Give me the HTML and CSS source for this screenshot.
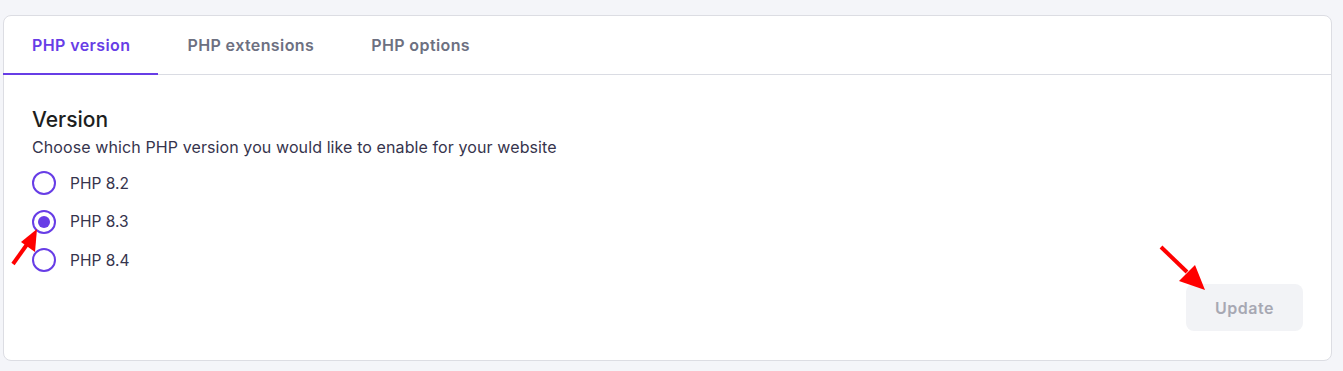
FILE: index.html
```html
<!DOCTYPE html>
<html lang="en">
<head>
<meta charset="utf-8">
<title>PHP configuration</title>
<link rel="stylesheet" href="styles.css">
</head>
<body>
<div class="page">
  <section class="card">
    <nav class="tabs">
      <a class="tab active">PHP version</a>
      <a class="tab">PHP extensions</a>
      <a class="tab">PHP options</a>
    </nav>
    <div class="content">
      <h2 class="title">Version</h2>
      <p class="desc">Choose which PHP version you would like to enable for your website</p>
      <ul class="radios">
        <li class="option"><span class="radio"></span><span class="label">PHP 8.2</span></li>
        <li class="option"><span class="radio checked"></span><span class="label">PHP 8.3</span></li>
        <li class="option"><span class="radio"></span><span class="label">PHP 8.4</span></li>
      </ul>
      <div class="actions">
        <button class="btn" disabled>Update</button>
      </div>
    </div>
  </section>
  <svg class="arrow arrow-radio" width="40" height="50" viewBox="0 0 40 50">
    <line x1="3" y1="45" x2="18" y2="24" stroke="#ff0000" stroke-width="4"/>
    <polygon points="27,10 25,33 11,23" fill="#ff0000"/>
  </svg>
  <svg class="arrow arrow-btn" width="60" height="60" viewBox="0 0 60 60">
    <line x1="4" y1="4" x2="30" y2="29" stroke="#ff0000" stroke-width="4"/>
    <polygon points="48,47 22,38 38,22" fill="#ff0000"/>
  </svg>
</div>
</body>
</html>
```

FILE: styles.css
```css
* { box-sizing: border-box; }
html, body { margin: 0; padding: 0; }
body {
  background: #f4f5f9;
  font-family: Inter, "Noto Sans", "Liberation Sans", sans-serif;
  color: #1d1e20;
}
.page {
  position: relative;
  padding: 15px 11px 10px 3px;
}
.card {
  background: #ffffff;
  border: 1px solid #dcdde3;
  border-radius: 8px;
  height: 346px;
  display: flex;
  flex-direction: column;
}
.tabs {
  display: flex;
  height: 59px;
  border-bottom: 1px solid #dadce3;
  margin-left: -1px;
}
.tab {
  display: flex;
  align-items: center;
  padding: 1px 28px 0 29px;
  font-size: 16px;
  font-weight: 600;
  letter-spacing: 0.4px;
  color: #6d7081;
  border-bottom: 2px solid transparent;
  margin-bottom: -1px;
}
.tab.active {
  color: #673de6;
  border-bottom: 2px solid #673de6;
}
.content {
  flex: 1;
  display: flex;
  flex-direction: column;
  padding: 31px 28px 29px 28px;
}
.title {
  margin: 0;
  font-size: 21px;
  font-weight: 500;
  line-height: 28px;
  color: #1d1e20;
}
.desc {
  margin: 1px 0 0 0;
  font-size: 16px;
  letter-spacing: 0.1px;
  line-height: 24px;
  color: #36344d;
}
.radios {
  list-style: none;
  margin: 12px 0 0 0;
  padding: 0;
  display: flex;
  flex-direction: column;
  gap: 14.5px;
}
.option {
  display: flex;
  align-items: center;
  gap: 14px;
  height: 24px;
}
.radio {
  width: 24px;
  height: 24px;
  border: 2px solid #673de6;
  border-radius: 50%;
  display: flex;
  align-items: center;
  justify-content: center;
  flex-shrink: 0;
}
.radio.checked::after {
  content: "";
  width: 12px;
  height: 12px;
  border-radius: 50%;
  background: #673de6;
}
.label {
  font-size: 15.5px;
  color: #36344d;
}
.actions {
  margin-top: auto;
  display: flex;
  justify-content: flex-end;
}
.btn {
  width: 117px;
  height: 47px;
  border: none;
  border-radius: 8px;
  background: #f2f3f6;
  color: #a7a8b3;
  font-family: inherit;
  font-size: 16px;
  font-weight: 600;
  letter-spacing: 0.5px;
}
.arrow { position: absolute; }
.arrow-radio { left: 10px; top: 219px; }
.arrow-btn { left: 1157px; top: 243px; }
```
